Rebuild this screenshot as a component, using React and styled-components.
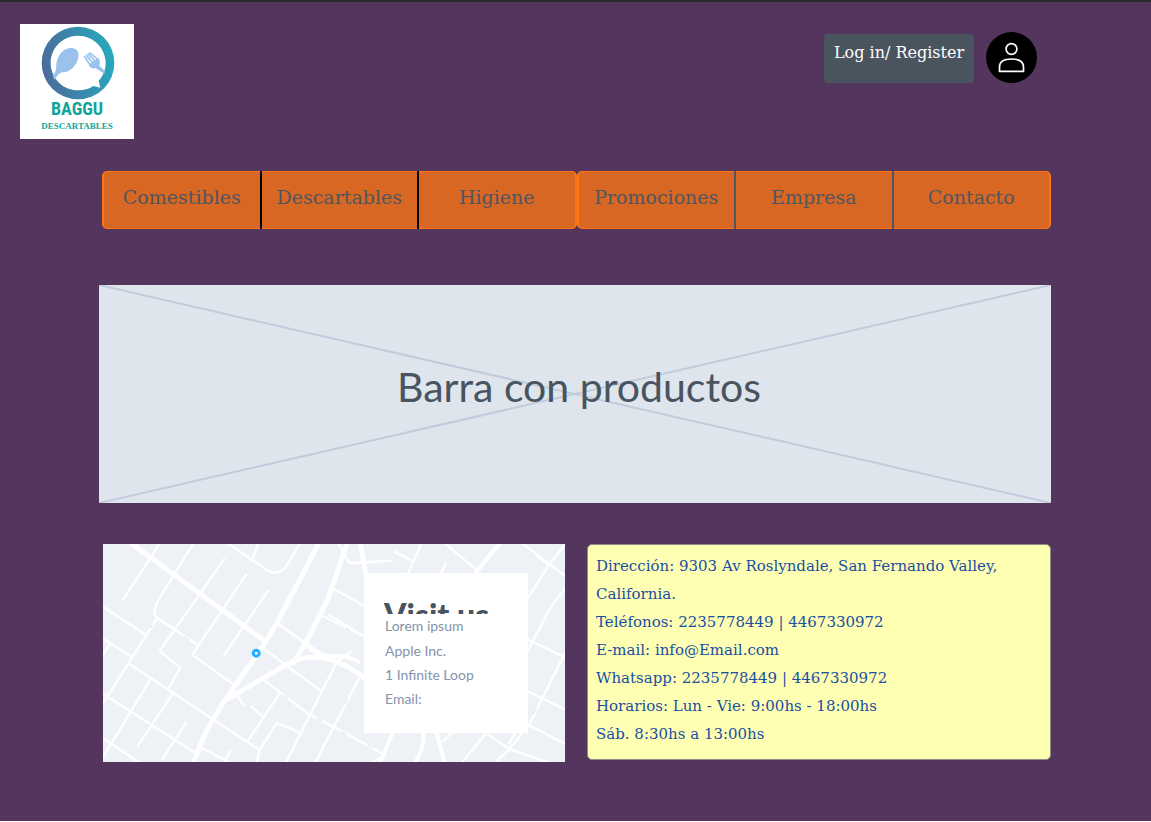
import React from "react";
import styled, { createGlobalStyle } from "styled-components";

const slab = `"DejaVu Serif", "Liberation Serif", serif`;
const sans = `Lato, "Liberation Sans", sans-serif`;

const GlobalStyle = createGlobalStyle`
  *, *::before, *::after { box-sizing: border-box; }
  body { margin: 0; background: #ffffff; font-family: ${sans}; }
  h1, h2, p, ul { margin: 0; padding: 0; }
`;

const Page = styled.div`
  min-height: calc(100vh - 1px);
  border-top: 2px solid #2b2a2c;
  background: #53355d;
  padding-bottom: 40px;
`;

const Header = styled.header`
  display: flex;
  justify-content: space-between;
  align-items: flex-start;
  padding: 22px 114px 0 20px;
`;

const Logo = styled.a`
  display: flex;
  flex-direction: column;
  align-items: center;
  width: 114px;
  height: 115px;
  background: #ffffff;
  text-decoration: none;
  color: #10a598;

  svg { display: block; }
`;

const LogoName = styled.span`
  font: bold 18px/18px "Liberation Sans Narrow", "Roboto Condensed", "Liberation Sans", sans-serif;
`;

const LogoTagline = styled.span`
  font: bold 9px/16px "Liberation Serif", serif;
`;

const Account = styled.div`
  display: flex;
  gap: 12px;
  padding-top: 8px;
`;

const LoginButton = styled.button`
  display: flex;
  align-items: flex-start;
  justify-content: center;
  width: 150px;
  height: 49px;
  margin-top: 2px;
  padding: 8px 0 0;
  border: 0;
  border-radius: 4px;
  background: #4a545f;
  color: #ffffff;
  font: 16px/22px ${slab};
  white-space: nowrap;
`;

const AvatarButton = styled.button`
  width: 51px;
  height: 51px;
  padding: 0;
  border: 0;
  border-radius: 50%;
  background: #000000;

  svg { display: block; }
`;

const Content = styled.main`
  padding: 32px 100px 0 99px;
`;

const Nav = styled.nav`
  display: flex;
  padding-left: 3px;
`;

const NavGroup = styled.div`
  display: flex;
  flex: 1;
  height: 58px;
  border: solid #ff7514;
  border-width: 1px 2px;
  border-radius: 5px;
  background: #d86723;
`;

const NavLink = styled.a`
  flex: 1 1 0;
  min-width: 0;
  margin: -1px 0;
  padding-top: 13px;
  border: solid transparent;
  border-width: 0;
  color: #50565f;
  font: 19px/26px ${slab};
  text-align: center;
  text-decoration: none;

  &:not(:first-child) {
    border-left: 2px solid ${(p) => p.$divider};
  }
`;

const Banner = styled.section`
  display: grid;
  height: 218px;
  margin-top: 56px;
  background: #dee5ed;

  > * { grid-area: 1 / 1; }
  svg { display: block; width: 100%; height: 218px; }
`;

const BannerTitle = styled.h1`
  place-self: center;
  padding: 0 0 14px 8px;
  color: #485460;
  font: 400 41px/50px ${sans};
  z-index: 1;
`;

const InfoRow = styled.div`
  display: grid;
  grid-template-columns: 462fr 464fr;
  gap: 22px;
  align-items: start;
  margin-top: 41px;
  padding-left: 4px;
`;

const MapPanel = styled.section`
  position: relative;
  height: 218px;
  background: #eef1f6;
  overflow: hidden;

  > svg { display: block; width: 100%; height: 100%; }
`;

const VisitCard = styled.div`
  position: absolute;
  top: 29px;
  right: 37px;
  width: 164px;
  height: 160px;
  padding: 22px 20px 0;
  background: #ffffff;
  color: #8594ad;
  font: 14px/24px ${sans};

  p, address { padding-left: 1px; }
`;

const VisitTitle = styled.h2`
  height: 19px;
  overflow: hidden;
  color: #485460;
  font: 900 32px/40px ${sans};
  white-space: nowrap;
`;

const VisitAddress = styled.address`
  margin-top: 1px;
  font-style: normal;
`;

const ContactBox = styled.ul`
  min-height: 216px;
  padding: 7px 8px 10px;
  border: 1px solid #8d8f86;
  border-radius: 5px;
  background: #ffffb3;
  color: #184fa3;
  font: 15px/28px ${slab};
  list-style: none;
`;

const navGroups = [
  { divider: "#000000", items: ["Comestibles", "Descartables", "Higiene"] },
  { divider: "#50565f", items: ["Promociones", "Empresa", "Contacto"] },
];

const contactLines = [
  "Teléfonos: 2235778449 | 4467330972",
  "E-mail: info@Email.com",
  "Whatsapp: 2235778449 | 4467330972",
  "Horarios: Lun - Vie: 9:00hs - 18:00hs",
  "Sáb. 8:30hs a 13:00hs",
];

const LogoMark = () => (
  <svg width="114" height="76" viewBox="30 71 342 228" aria-hidden="true">
    <defs>
      <linearGradient id="ring" x1="0" x2="1" y1="0.6" y2="0.4">
        <stop offset="0" stopColor="#4c6a9b" />
        <stop offset="1" stopColor="#25aabd" />
      </linearGradient>
    </defs>
    <path
      fill="url(#ring)"
      fillRule="evenodd"
      d="M204 79a109 109 0 1 0 0 218a109 109 0 1 0 0-218ZM204 106C250 106 287 143 287 188C287 210 279 228 266 241L271 262L250 257C237 266 222 270 204 270C158 270 122 233 122 188C122 143 158 106 204 106Z"
    />
    <path
      fill="#9bc1ed"
      d="M128 224C139 218 138 205 139 192C142 165 159 143 185 143C209 144 210 169 199 188C188 207 173 216 158 216C148 217 142 226 133 239Z"
    />
    <path
      fill="#9bc1ed"
      d="M248 184L264 173C273 182 270 190 267 195L284 211L284 221L256 203C249 207 240 202 236 195Z"
    />
    <path
      stroke="#9bc1ed"
      strokeWidth="5"
      strokeLinecap="round"
      d="M224 169L242 196M229 165L250 190M234 161L257 184M239 158L264 177"
    />
  </svg>
);

const UserIcon = () => (
  <svg width="51" height="51" viewBox="0 0 51 51" fill="none" stroke="#ffffff" strokeWidth="1.7" aria-hidden="true">
    <circle cx="25.5" cy="17" r="5.4" />
    <path d="M13.5 39.4V35C13.5 29.8 17.8 27 25.5 27S37.5 29.8 37.5 35V39.4Z" strokeLinejoin="round" />
  </svg>
);

const StreetMap = () => (
  <svg viewBox="24 26 1387 655" preserveAspectRatio="xMidYMid slice" aria-hidden="true">
    <g fill="none" stroke="#ffffff" strokeWidth="7" strokeLinejoin="round" strokeLinecap="round">
      <path d="M198 20L84 193M298 20L196 185Q168 232 184 246L310 330M388 72L194 347L256 398L218 464M453 119L292 359L417 449M519 167L387 361" />
      <path d="M395 22L510 100Q545 128 575 92L618 20M490 24L472 75" />
      <path d="M20 212L150 297M186 250L20 510M20 308L108 364M44 326L20 366M102 386L494 645L484 690M167 432L20 672M234 474L128 633M273 563L204 670M20 473L300 653M20 606L140 688M318 638L410 685M406 646L390 680" />
      <path d="M546 264L632 324M508 342L678 467M724 385L572 685M512 438L640 536L720 578M556 472L457 620M470 515L502 542M430 486L446 511M494 645L546 563L614 592M680 240L810 305M715 160L810 213" />
      <path d="M792 430L660 685M705 568L870 660L820 690M722 380L770 350M705 240L808 304" />
      <path d="M730 24L765 84L888 76M900 50L953 77M980 24L940 115M1050 24L1145 104M1052 88L1030 130M1280 22L1418 127M1414 24L1363 88L1298 190M1325 60L1365 90M1418 155Q1372 202 1350 250L1298 350M1298 312L1418 370M1418 340L1303 570L1245 640M1298 468L1418 526M1303 570L1418 630M1180 598L1245 643L1370 685M1245 643L1195 688M1170 598L1100 685M1080 585L1045 618M1262 590L1244 625M1220 24L1150 104" />
      <g strokeWidth="12">
        <path d="M790 380Q750 355 705 365" />
        <path d="M1215 22L1145 110M1025 590L1050 685" />
        <path d="M984 590Q993 630 960 685M895 590L855 685" />
      </g>
      <g strokeWidth="15">
        <path d="M105 22L508 316M674 20L548 260L503 335L390 495L350 560Q318 615 294 690" />
        <path d="M758 22L700 190L630 328L595 383M398 492L575 388Q680 330 808 428M630 322Q660 358 715 368" />
        <path d="M796 22L812 110" />
      </g>
    </g>
    <g stroke="#c9cbd0" strokeWidth="3" strokeDasharray="3 2">
      <path d="M165 279L174 268M268 303L281 314M566 480L579 489M666 550L680 557M754 279L765 287M751 505L758 494M742 590L755 598M820 631L830 638M1317 533L1325 522" />
    </g>
    <circle cx="484" cy="354" r="9" fill="#ffffff" stroke="#21b0ff" strokeWidth="9" />
  </svg>
);

export default function App() {
  return (
    <>
      <GlobalStyle />
      <Page>
        <Header>
          <Logo href="#inicio">
            <LogoMark />
            <LogoName>BAGGU</LogoName>
            <LogoTagline>DESCARTABLES</LogoTagline>
          </Logo>
          <Account>
            <LoginButton type="button">Log in/ Register</LoginButton>
            <AvatarButton type="button" aria-label="Mi cuenta">
              <UserIcon />
            </AvatarButton>
          </Account>
        </Header>
        <Content>
          <Nav>
            {navGroups.map((group) => (
              <NavGroup key={group.divider}>
                {group.items.map((item) => (
                  <NavLink key={item} href={`#${item.toLowerCase()}`} $divider={group.divider}>
                    {item}
                  </NavLink>
                ))}
              </NavGroup>
            ))}
          </Nav>
          <Banner>
            <svg viewBox="0 0 952 218" preserveAspectRatio="none" aria-hidden="true">
              <path d="M0 0L952 218M952 0L0 218" stroke="#c1cbdb" strokeWidth="2" />
            </svg>
            <BannerTitle>Barra con productos</BannerTitle>
          </Banner>
          <InfoRow>
            <MapPanel>
              <StreetMap />
              <VisitCard>
                <VisitTitle>Visit us</VisitTitle>
                <p>Lorem ipsum</p>
                <VisitAddress>
                  Apple Inc.
                  <br />
                  1 Infinite Loop
                  <br />
                  Email:
                </VisitAddress>
              </VisitCard>
            </MapPanel>
            <ContactBox>
              <li>
                Dirección: 9303 Av Roslyndale, San Fernando Valley,
                <br />
                California.
              </li>
              {contactLines.map((line) => (
                <li key={line}>{line}</li>
              ))}
            </ContactBox>
          </InfoRow>
        </Content>
      </Page>
    </>
  );
}
